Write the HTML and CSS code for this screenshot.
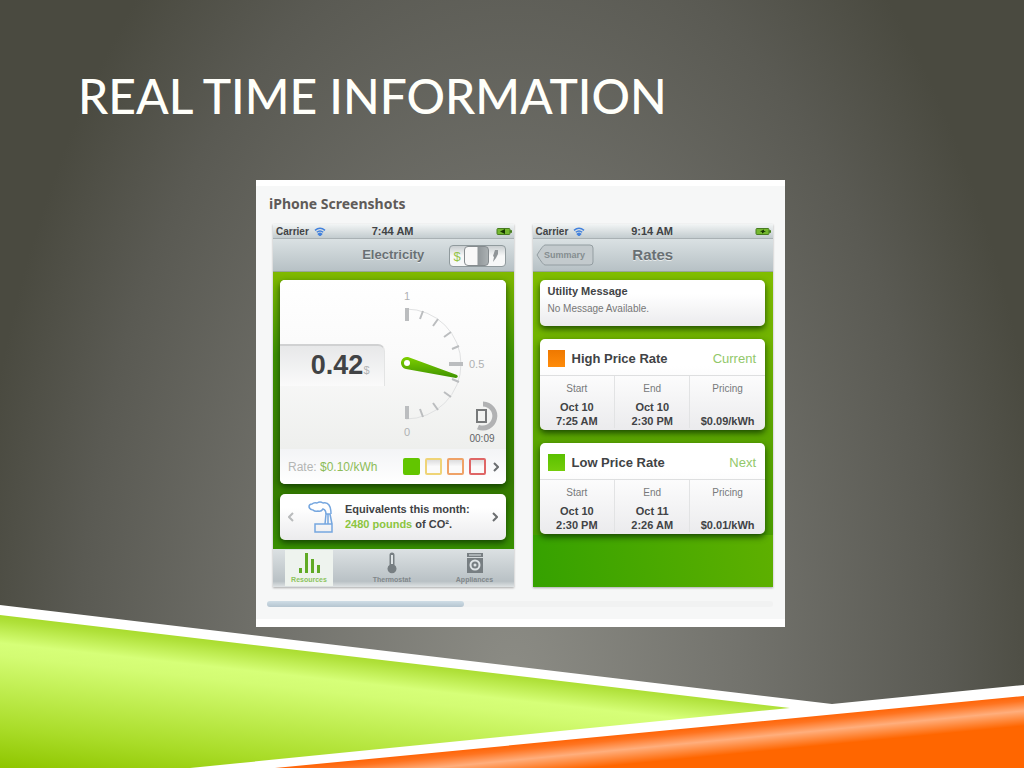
FILE: index.html
```html
<!DOCTYPE html>
<html lang="en">
<head>
    <meta charset="UTF-8">
    <meta name="viewport" content="width=device-width, initial-scale=1.0">
    <title>Real Time Information</title>
    <link rel="stylesheet" href="styles.css">
</head>
<body>
    <main class="slide">
        <h1>Real Time Information</h1>

        <section class="gallery">
            <h2>iPhone Screenshots</h2>
            <div class="phones">

                <!-- Electricity -->
                <article class="phone">
                    <div class="status-bar">
                        <span class="carrier">Carrier
                            <svg class="wifi" viewBox="0 0 12 9"><path d="M1 3.4Q6-.8 11 3.4M2.8 5.3Q6 2.6 9.2 5.3M4.4 7Q6 5.6 7.6 7L6 8.6z"/></svg>
                        </span>
                        <span class="time">7:44 AM</span>
                        <svg class="battery" viewBox="0 0 16 8"><rect x="1" y="1" width="13" height="6" rx="1"/><path d="M14.5 3v2h1V3z"/><path class="bolt" d="M4 4l5-2.500v5z"/></svg>
                    </div>
                    <div class="nav-bar">
                        <h3 class="nav-small">Electricity</h3>
                        <label class="toggle">
                            <span class="toggle-dollar">$</span>
                            <input type="checkbox" role="switch" aria-label="Show cost">
                            <svg class="plug" viewBox="0 0 8 14"><path d="M4 1h3v4L5 9l-3 4 1-5-1-1z"/></svg>
                        </label>
                    </div>

                    <div class="screen">
                        <div class="card usage">
                            <div class="meter">
                                <div class="readout"><strong>0.42</strong><small>$</small></div>
                                <svg class="gauge" viewBox="0 0 121 170">
                                    <defs>
                                        <linearGradient id="needle" x1="0" y1="0" x2="0" y2="1">
                                            <stop offset="0" stop-color="#7ed000"/>
                                            <stop offset="1" stop-color="#3f9300"/>
                                        </linearGradient>
                                    </defs>
                                    <path class="arc" d="M21 29A55 55 0 0 1 21 139"/>
                                    <path class="ticks" d="M38 31L35 39M53 39L48 46M66 52L59 57M74 66L67 69M74 102L67 99M66 117L59 112M53 130L48 123M38 137L35 129"/>
                                    <path class="ticks-main" d="M22 28v13M64 84h14M22 126v13"/>
                                    <path fill="url(#needle)" d="M23 77L72 95Q74 97 71 98L21 89A6 6 0 1 1 23 77z"/>
                                    <circle cx="22" cy="83" r="3" fill="#fff"/>
                                    <text x="22" y="20" text-anchor="middle">1</text>
                                    <text x="84" y="88">0.5</text>
                                    <text x="22" y="156" text-anchor="middle">0</text>
                                    <path class="timer" d="M98 124A12 12 0 1 1 93 147"/>
                                    <rect class="timer-box" x="92" y="130" width="9" height="12"/>
                                    <text class="timer-text" x="97" y="162" text-anchor="middle">00:09</text>
                                </svg>
                            </div>
                            <div class="rate-row">
                                <span>Rate: <b>$0.10/kWh</b></span>
                                <span class="levels">
                                    <i class="level level-on"></i>
                                    <i class="level level-yellow"></i>
                                    <i class="level level-orange"></i>
                                    <i class="level level-red"></i>
                                </span>
                                <button class="arrow" aria-label="Rates"><svg viewBox="0 0 6 10"><path d="M1 1l4 4-4 4"/></svg></button>
                            </div>
                        </div>

                        <div class="card equivalents">
                            <button class="arrow arrow-off" aria-label="Previous"><svg viewBox="0 0 6 10"><path d="M5 1L1 5l4 4"/></svg></button>
                            <svg class="factory" viewBox="0 0 26 32">
                                <path d="M7 23h17v8H7zM17 23l1-10h4l2 10M20 23V13"/>
                                <path d="M18 13q0-4-3-5-2 3-5 2-3 1-5-1-3 0-4-3 0-3 3-3 2-2 5-1 3-2 6 0 4-1 6 2 2 3 2 9"/>
                            </svg>
                            <p>Equivalents this month:<br><em>2480 pounds</em> of CO².</p>
                            <button class="arrow" aria-label="Next"><svg viewBox="0 0 6 10"><path d="M1 1l4 4-4 4"/></svg></button>
                        </div>
                    </div>

                    <nav class="tab-bar">
                        <button class="tab active">
                            <svg viewBox="0 0 24 22"><path d="M2 16h3v5H2zM8 1h3v20H8zM14 7h3v14h-3zM20 13h3v8h-3z"/></svg>
                            Resources
                        </button>
                        <button class="tab">
                            <svg viewBox="0 0 24 22"><path d="M9.500 3a2.500 2.500 0 0 1 5 0v10a4.500 4.500 0 1 1-5 0z"/><path class="light" d="M11 3h2v9h-2z"/></svg>
                            Thermostat
                        </button>
                        <button class="tab">
                            <svg viewBox="0 0 24 22"><path d="M4 1h16v4H4zM4 6h16v15H4z"/><path class="light" d="M6 2.500h12v1H6z"/><circle class="light" cx="12" cy="13" r="5.500"/><circle cx="12" cy="13" r="3.500"/><circle class="light" cx="12" cy="13" r="1.500"/></svg>
                            Appliances
                        </button>
                    </nav>
                </article>

                <!-- Rates -->
                <article class="phone">
                    <div class="status-bar">
                        <span class="carrier">Carrier
                            <svg class="wifi" viewBox="0 0 12 9"><path d="M1 3.4Q6-.8 11 3.4M2.8 5.3Q6 2.6 9.2 5.3M4.4 7Q6 5.6 7.6 7L6 8.6z"/></svg>
                        </span>
                        <span class="time">9:14 AM</span>
                        <svg class="battery" viewBox="0 0 16 8"><rect x="1" y="1" width="13" height="6" rx="1"/><path d="M14.5 3v2h1V3z"/><path class="bolt" d="M5 4l4-2v1.500h2L7 6V4.500z"/></svg>
                    </div>
                    <div class="nav-bar">
                        <button class="back">
                            <svg viewBox="0 0 58 22" preserveAspectRatio="none"><path d="M9 1h45q3 0 3 3v14q0 3-3 3H9Q7 21 1 11 7 1 9 1z"/></svg>
                            <span>Summary</span>
                        </button>
                        <h3>Rates</h3>
                    </div>

                    <div class="screen screen-rates">
                        <div class="card message">
                            <h4>Utility Message</h4>
                            <p>No Message Available.</p>
                        </div>

                        <div class="card rate">
                            <div class="rate-head">
                                <i class="swatch swatch-high"></i>
                                <h4>High Price Rate</h4>
                                <span>Current</span>
                            </div>
                            <table>
                                <thead>
                                    <tr><th>Start</th><th>End</th><th>Pricing</th></tr>
                                </thead>
                                <tbody>
                                    <tr><td>Oct 10<br>7:25 AM</td><td>Oct 10<br>2:30 PM</td><td>$0.09/kWh</td></tr>
                                </tbody>
                            </table>
                        </div>

                        <div class="card rate">
                            <div class="rate-head">
                                <i class="swatch swatch-low"></i>
                                <h4>Low Price Rate</h4>
                                <span>Next</span>
                            </div>
                            <table>
                                <thead>
                                    <tr><th>Start</th><th>End</th><th>Pricing</th></tr>
                                </thead>
                                <tbody>
                                    <tr><td>Oct 10<br>2:30 PM</td><td>Oct 11<br>2:26 AM</td><td>$0.01/kWh</td></tr>
                                </tbody>
                            </table>
                        </div>
                    </div>
                </article>
            </div>
            <div class="scroll-track"><div class="scroll-thumb"></div></div>
        </section>
    </main>

    <!-- Bottom ribbons -->
    <svg class="ribbons" viewBox="0 0 1024 178" preserveAspectRatio="none" aria-hidden="true">
        <defs>
            <linearGradient id="green" gradientUnits="userSpaceOnUse" x1="0" y1="22" x2="-17" y2="175">
                <stop offset="0" stop-color="#a4d826"/>
                <stop offset=".06" stop-color="#b0e13a"/>
                <stop offset=".2" stop-color="#d6ff78"/>
                <stop offset=".28" stop-color="#d3fc73"/>
                <stop offset=".75" stop-color="#a9dc28"/>
                <stop offset="1" stop-color="#8fc600"/>
            </linearGradient>
            <linearGradient id="orange" gradientUnits="userSpaceOnUse" x1="650" y1="142" x2="656" y2="204">
                <stop offset="0" stop-color="#ff6508"/>
                <stop offset=".08" stop-color="#ff7420"/>
                <stop offset=".24" stop-color="#ffae7c"/>
                <stop offset=".48" stop-color="#ff6600"/>
            </linearGradient>
        </defs>
        <path fill="#fff" d="M0 15L832 114 1024 95V178H0z"/>
        <path fill="url(#green)" d="M0 25L790 118 190 178H0z"/>
        <path fill="url(#orange)" d="M1024 106V178H275z"/>
    </svg>
</body>
</html>
```

FILE: styles.css
```css
* {
    margin: 0;
    padding: 0;
    box-sizing: border-box;
}

body {
    min-height: 100vh;
    position: relative;
    overflow: hidden;
    background: radial-gradient(ellipse 53% 125% at 50% 90%, #8c8c85 0%, #73736d 42%, #5a5a53 80%, #4a4a40 100%);
    font-family: "Liberation Sans", Arial, sans-serif;
    color: #414345;
}

button {
    border: none;
    background: none;
    font-family: inherit;
    cursor: pointer;
}

.slide {
    position: relative;
    z-index: 1;
    padding: 66px 61px 0 78px;
}

h1 {
    font-family: Lato, sans-serif;
    font-size: 48px;
    line-height: 60px;
    font-weight: 500;
    color: #fffffa;
    text-transform: uppercase;
    margin-bottom: 54px;
}

.gallery {
    max-width: 529px;
    margin: 0 auto;
    padding: 8px 12px 12px 11px;
    background: #f6f7f7;
    border-top: 6px solid #fff;
    border-bottom: 8px solid #fff;
}

h2 {
    font-family: "Noto Sans", sans-serif;
    font-size: 14px;
    line-height: 20px;
    font-weight: 700;
    color: #5f5b59;
    margin: 0 0 10px 2px;
}

.phones {
    display: flex;
    gap: 19px;
    padding-left: 6px;
}

.phone {
    flex: 1;
    display: flex;
    flex-direction: column;
    height: 363px;
    box-shadow: 0 1px 2px #aaa;
}

/* Bars */
.status-bar {
    display: flex;
    align-items: center;
    justify-content: space-between;
    height: 15px;
    padding: 0 2px 0 3px;
    background: linear-gradient(#f2f5f5, #c3cccf);
    border-bottom: 1px solid #a9b1b4;
    font-size: 10px;
    font-weight: bold;
}

.carrier {
    display: flex;
    align-items: center;
    gap: 5px;
    flex: 1;
}

.wifi {
    width: 12px;
    height: 9px;
    fill: none;
    stroke: #4281dc;
    stroke-width: 1.5;
}

.time {
    font-size: 11px;
}

.battery {
    width: 16px;
    height: 9px;
    margin-left: 82px;
    fill: #74b72f;
    stroke: #477c21;
    stroke-width: 1;
}

.battery .bolt {
    fill: #173500;
    stroke: none;
}

.nav-bar {
    position: relative;
    display: flex;
    align-items: center;
    justify-content: center;
    height: 33px;
    background: linear-gradient(#dae1e3, #b7c1c5);
    border-bottom: 1px solid #98a69a;
}

h3 {
    font-size: 15px;
    line-height: 18px;
    color: #697074;
    text-shadow: 0 1px 0 #e6eaeb;
}

.nav-small {
    font-size: 13px;
}

.toggle {
    position: absolute;
    right: 8px;
    top: 6px;
    width: 57px;
    height: 22px;
    display: flex;
    align-items: center;
    justify-content: space-between;
    padding: 0 5px 0 4px;
    border: 1px solid #909a9d;
    border-radius: 4px;
    background: linear-gradient(#c9ced0, #f7f8f8 50%);
}

.toggle-dollar {
    font-size: 13px;
    color: #96c449;
}

.toggle input {
    appearance: none;
    width: 25px;
    height: 20px;
    border-radius: 4px;
    background: linear-gradient(90deg, #f8f8f8 12px, #91979a 13px, #aab0b2);
    border: 1px solid #858b8e;
}

.plug {
    width: 8px;
    height: 14px;
    fill: #909598;
}

.back {
    position: absolute;
    left: 3px;
    top: 5px;
    width: 58px;
    height: 22px;
    font-size: 9px;
    font-weight: bold;
    color: #858d90;
}

.back svg {
    position: absolute;
    inset: 0;
    width: 100%;
    height: 100%;
    fill: #c3cacd;
    stroke: #939da1;
}

.back span {
    position: relative;
}

/* Screens */
.screen {
    flex: 1;
    display: flex;
    flex-direction: column;
    gap: 10px;
    padding: 8px 8px 9px 7px;
    background: linear-gradient(#80b900, #3d9000 30%, #367a00 75%, #389000);
}

.screen-rates {
    gap: 13px;
    background: linear-gradient(80deg, #35a100, #5eb000) bottom / 100% 52px no-repeat, linear-gradient(#80bd00, #5ca600 50%, #439a00);
}

.card {
    border-radius: 5px;
    background: linear-gradient(#fff 30%, #ebebed);
    box-shadow: 0 3px 6px rgba(10, 50, 0, .8);
}

.usage {
    height: 204px;
    overflow: hidden;
}

.meter {
    display: flex;
    align-items: center;
    height: 169px;
    background: linear-gradient(#fff, #fafafa 45%, #eeefed);
}

.readout {
    flex: 1;
    height: 42px;
    display: flex;
    align-items: baseline;
    justify-content: flex-end;
    padding: 4px 14px 0 0;
    border-top: 2px solid #d0d1d2;
    border-right: 1px solid #e3e4e4;
    border-radius: 0 7px 0 0;
    background: linear-gradient(#e7e8e9, #fafafa);
}

.readout strong {
    font-size: 27px;
    line-height: 30px;
}

.readout small {
    font-size: 11px;
    color: #b2b4b5;
}

.gauge {
    width: 121px;
    height: 170px;
    fill: none;
    stroke: #bbbdbf;
}

.gauge .arc {
    stroke: #e0e1e2;
}

.gauge .ticks {
    stroke-width: 2;
}

.gauge .ticks-main {
    stroke-width: 4;
}

.gauge .timer {
    stroke: #b1b2b3;
    stroke-width: 5;
}

.gauge .timer-box {
    stroke: #77797a;
    stroke-width: 2;
}

.gauge text {
    font-size: 11px;
    fill: #afb1b3;
    stroke: none;
}

.gauge .timer-text {
    font-size: 10px;
    fill: #626466;
}

.gauge path[fill],
.gauge circle {
    stroke: none;
}

.rate-row {
    display: flex;
    align-items: center;
    height: 35px;
    padding: 0 7px 0 8px;
    background: linear-gradient(#f3f4f6, #fff);
    font-size: 12px;
    color: #b4b6b4;
}

.rate-row b {
    font-weight: normal;
    color: #8dbc57;
}

.levels {
    display: flex;
    gap: 5px;
    margin: 0 7px 0 auto;
}

.level {
    width: 17px;
    height: 17px;
    border: 2px solid;
    border-radius: 2px;
    background: linear-gradient(#dcdcdd, #fafafa 50%);
}

.level-on {
    background: #62c500;
    border-color: #62c500;
}

.level-yellow { border-color: #efd477; }
.level-orange { border-color: #efa267; }
.level-red { border-color: #df6666; }

.arrow {
    width: 6px;
    height: 20px;
}

.arrow svg {
    display: block;
    width: 6px;
    height: 10px;
    fill: none;
    stroke: #6b6e70;
    stroke-width: 2;
}

.arrow-off svg {
    stroke: #b9bbbc;
}

.equivalents {
    display: flex;
    align-items: center;
    height: 46px;
    padding: 0 8px;
    font-size: 11px;
    line-height: 15px;
    font-weight: bold;
}

.equivalents p {
    flex: 1;
    white-space: nowrap;
}

.equivalents em {
    font-style: normal;
    color: #8cc540;
}

.factory {
    width: 26px;
    height: 32px;
    margin: 0 11px 0 14px;
    fill: none;
    stroke: #75a6df;
    stroke-width: 1.5;
}

.tab-bar {
    display: flex;
    justify-content: space-between;
    height: 38px;
    padding: 1px 15px 1px 12px;
    background: linear-gradient(#dce1e3, #b9c1c5 85%, #dfe3e4);
}

.tab {
    width: 48px;
    display: flex;
    flex-direction: column;
    align-items: center;
    gap: 2px;
    padding-top: 2px;
    font-size: 7px;
    line-height: 8px;
    font-weight: bold;
    color: #81878a;
    fill: #777e82;
}

.tab svg {
    width: 24px;
    height: 22px;
}

.tab .light {
    fill: #dfe4e6;
}

.tab.active {
    background: #eef3ee;
    color: #8cc35d;
    fill: #60aa25;
}

/* Rates */
h4 {
    font-size: 11px;
    line-height: 14px;
}

.message {
    height: 46px;
    padding: 4px 8px;
    font-size: 10px;
    color: #777;
}

.message h4 {
    color: #414345;
    margin-bottom: 5px;
}

.rate {
    height: 91px;
}

.rate-head {
    display: flex;
    align-items: center;
    gap: 7px;
    height: 37px;
    padding: 3px 9px 0 8px;
    border-bottom: 1px solid #dedfe0;
    font-size: 13px;
    color: #92c86a;
}

.rate-head h4 {
    flex: 1;
    font-size: 13px;
    color: #414345;
}

.swatch {
    width: 17px;
    height: 17px;
}

.swatch-high { background: linear-gradient(#ee7800, #ff8c0a); }
.swatch-low { background: linear-gradient(#5bc000, #74cd0b); }

table {
    width: 100%;
    table-layout: fixed;
    border-collapse: collapse;
    text-align: center;
}

th {
    height: 24px;
    font-size: 10px;
    font-weight: normal;
    color: #77797b;
}

td {
    height: 28px;
    font-size: 11px;
    line-height: 14px;
    font-weight: bold;
    vertical-align: bottom;
}

th + th,
td + td {
    border-left: 1px solid #e2e3e4;
}

/* Carousel scroll bar */
.scroll-track {
    height: 6px;
    margin-top: 14px;
    border-radius: 3px;
    background: #f1f2f2;
}

.scroll-thumb {
    width: 39%;
    height: 6px;
    border-radius: 3px;
    background: linear-gradient(#cfdde6, #b5c5d0);
}

/* Bottom ribbons */
.ribbons {
    position: absolute;
    left: 0;
    bottom: 0;
    width: 100%;
    height: 178px;
}
```
